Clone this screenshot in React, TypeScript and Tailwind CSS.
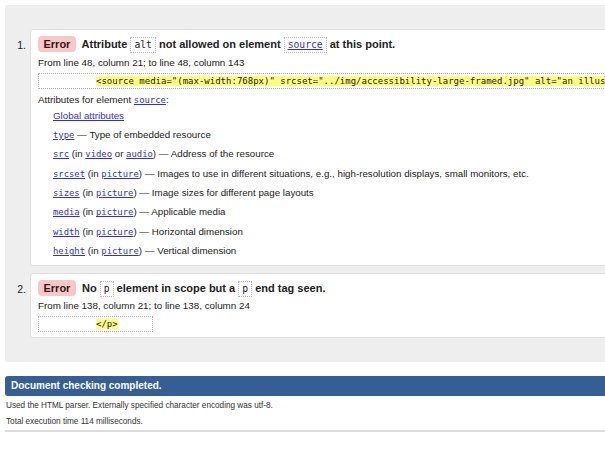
import React from 'react';

const MONO = "font-['DejaVu_Sans_Mono','Liberation_Mono',monospace]";

function Code({ children, link = false }: { children: React.ReactNode; link?: boolean }) {
  return (
    <span
      className={`inline-block border border-dotted border-[#b8b8b8] px-[3px] text-[9.7px] font-normal leading-[14px] ${MONO} ${
        link ? 'text-[#3333cc] underline' : 'text-[#222]'
      }`}
    >
      {children}
    </span>
  );
}

function MonoLink({ children }: { children: React.ReactNode }) {
  return <span className={`text-[8.9px] leading-none text-[#3333cc] underline ${MONO}`}>{children}</span>;
}

function Badge() {
  return (
    <span className="mr-[3px] inline-block rounded-[4px] bg-[#f6c9c9] px-[5.5px] leading-[16px] text-[#3a1414]">
      Error
    </span>
  );
}

function Extract({ children, width }: { children: React.ReactNode; width?: string }) {
  return (
    <div
      className={`mt-[3px] flex h-[16px] items-center whitespace-nowrap border border-dotted border-[#b0b0b0] pl-[57px] text-[9px] text-[#222] ${MONO} ${
        width ?? ''
      }`}
    >
      <span className="bg-[#ffff80] leading-[10px]">{children}</span>
    </div>
  );
}

const ATTRS: { name: string; ctx: React.ReactNode | null; desc: string }[] = [
  { name: 'type', ctx: null, desc: 'Type of embedded resource' },
  {
    name: 'src',
    ctx: (
      <>
        (in <MonoLink>video</MonoLink> or <MonoLink>audio</MonoLink>)
      </>
    ),
    desc: 'Address of the resource',
  },
  {
    name: 'srcset',
    ctx: (
      <>
        (in <MonoLink>picture</MonoLink>)
      </>
    ),
    desc: 'Images to use in different situations, e.g., high-resolution displays, small monitors, etc.',
  },
  {
    name: 'sizes',
    ctx: (
      <>
        (in <MonoLink>picture</MonoLink>)
      </>
    ),
    desc: 'Image sizes for different page layouts',
  },
  {
    name: 'media',
    ctx: (
      <>
        (in <MonoLink>picture</MonoLink>)
      </>
    ),
    desc: 'Applicable media',
  },
  {
    name: 'width',
    ctx: (
      <>
        (in <MonoLink>picture</MonoLink>)
      </>
    ),
    desc: 'Horizontal dimension',
  },
  {
    name: 'height',
    ctx: (
      <>
        (in <MonoLink>picture</MonoLink>)
      </>
    ),
    desc: 'Vertical dimension',
  },
];

function Item({ n, children }: { n: number; children: React.ReactNode }) {
  return (
    <li className="flex">
      <div className="w-[25px] shrink-0 pr-[4px] pt-[7px] text-right text-[10.5px] leading-[18px]">{n}.</div>
      <div className="flex-1 rounded-[3px] border border-[#e0e0e0] bg-white pl-[7px] pt-[5px]">{children}</div>
    </li>
  );
}

export default function App() {
  return (
    <div className="h-[449px] w-[605px] overflow-hidden bg-white pt-[5px] font-['Liberation_Sans',Arial,sans-serif] text-[#222]">
      <div className="ml-[5px] w-[900px] rounded-[3px] bg-[#eeeeee] pb-[24px] pt-[24px]">
        <ol className="flex flex-col gap-[7px]">
          <Item n={1}>
            <div className="h-[18px] whitespace-nowrap text-[11px] font-bold leading-[18px]">
              <Badge /> Attribute <Code>alt</Code> not allowed on element <Code link>source</Code> at this point.
            </div>
            <div className="mt-[2.5px] h-[14px] text-[9.8px] leading-[14px]">
              From line 48, column 21; to line 48, column 143
            </div>
            <Extract>
              {'<source media="(max-width:768px)" srcset="../img/accessibility-large-framed.jpg" alt="an illustration">'}
            </Extract>
            <div className="mt-[4.5px] h-[14px] text-[9.8px] leading-[14px]">
              Attributes for element <MonoLink>source</MonoLink>:
            </div>
            <ul className="-mt-[1.5px] pb-[4px] pl-[15px] text-[9.75px]">
              <li className="h-[19.4px] whitespace-nowrap leading-[19.4px]">
                <span className="text-[#3333cc] underline">Global attributes</span>
              </li>
              {ATTRS.map((a) => (
                <li key={a.name} className="h-[19.4px] whitespace-nowrap leading-[19.4px]">
                  <MonoLink>{a.name}</MonoLink> {a.ctx ? <>{a.ctx} </> : null}— {a.desc}
                </li>
              ))}
            </ul>
          </Item>
          <Item n={2}>
            <div className="h-[18px] whitespace-nowrap text-[11px] font-bold leading-[18px]">
              <Badge /> No <Code>p</Code> element in scope but a <Code>p</Code> end tag seen.
            </div>
            <div className="mt-[2.5px] h-[14px] text-[9.8px] leading-[14px]">
              From line 138, column 21; to line 138, column 24
            </div>
            <div className="pb-[5px]">
              <Extract width="w-[115px]">{'</p>'}</Extract>
            </div>
          </Item>
        </ol>
      </div>

      <div className="ml-[5px] mt-[14px] h-[20px] w-[900px] rounded-l-[3px] bg-[#365e96] pl-[6px] text-[10px] font-bold leading-[20px] text-white">
        Document checking completed.
      </div>
      <div className="ml-[5px] w-[900px] border-b-[2px] border-[#dedede] pb-[1px] pl-[1px] pt-[2px] text-[8.2px] leading-[15.6px] text-[#333]">
        <p>Used the HTML parser. Externally specified character encoding was utf-8.</p>
        <p>Total execution time 114 milliseconds.</p>
      </div>
    </div>
  );
}
